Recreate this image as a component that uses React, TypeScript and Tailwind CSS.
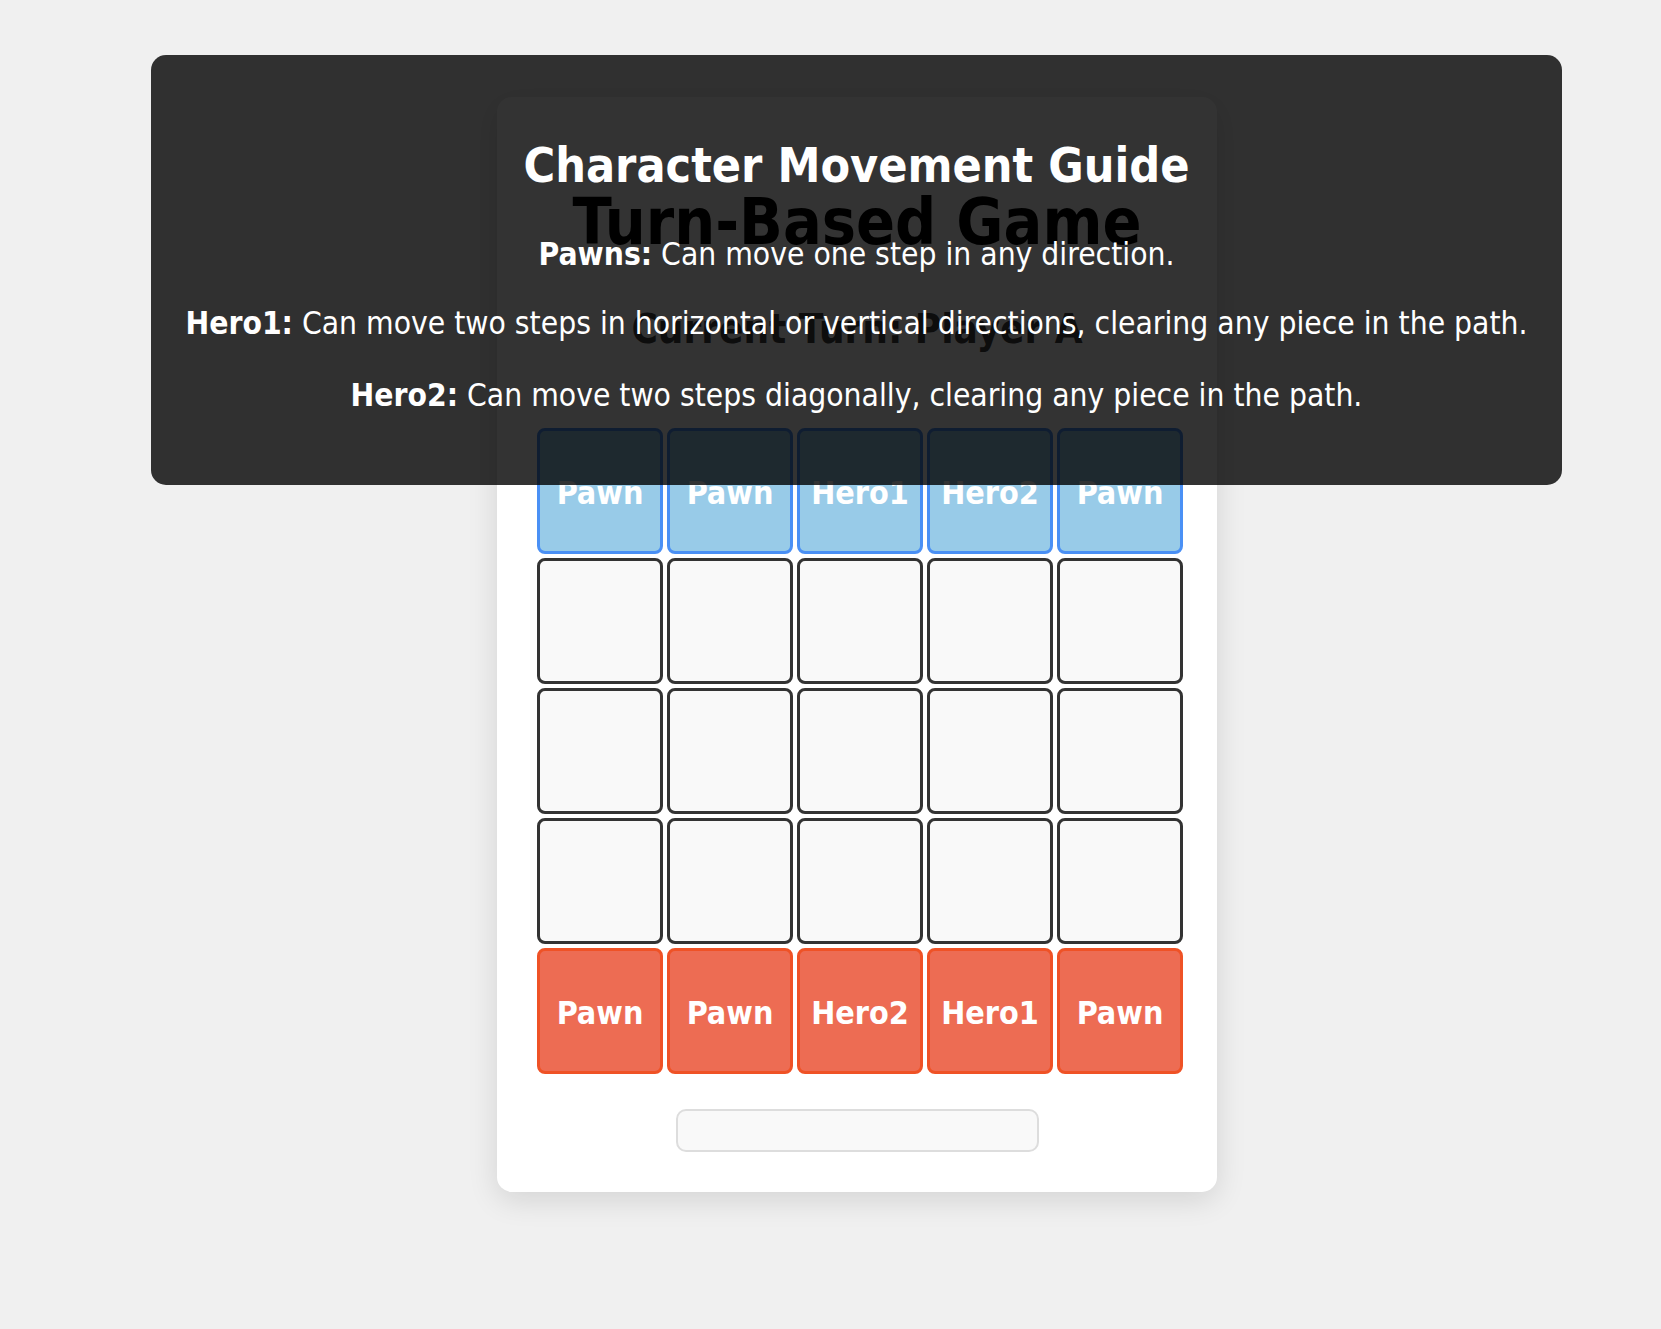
import React from "react";

type Side = "a" | "b" | null;

interface Cell {
  side: Side;
  label: string;
}

const topRow: Cell[] = ["Pawn", "Pawn", "Hero1", "Hero2", "Pawn"].map((label) => ({ side: "a", label }));
const bottomRow: Cell[] = ["Pawn", "Pawn", "Hero2", "Hero1", "Pawn"].map((label) => ({ side: "b", label }));
const emptyRow: Cell[] = Array.from({ length: 5 }, () => ({ side: null, label: "" }));

const board: Cell[][] = [topRow, emptyRow, emptyRow, emptyRow, bottomRow];

const fontStack = "font-['DejaVu_Sans_Condensed','DejaVu_Sans',sans-serif] font-stretch-condensed";

const BoardCell = ({ cell }: { cell: Cell }) => {
  const colors =
    cell.side === "a"
      ? "bg-[#98cbe8] border-[#4a90f5]"
      : cell.side === "b"
        ? "bg-[#ed6c53] border-[#ef5226]"
        : "bg-[#f9f9f9] border-[#333333]";

  return (
    <div
      className={`flex h-[126px] w-[126px] items-center justify-center rounded-[8px] border-[3px] pt-[4px] text-[32px] font-bold text-white ${colors}`}
    >
      {cell.label}
    </div>
  );
};

export default function App() {
  return (
    <div className={`relative min-h-screen bg-[#f0f0f0] ${fontStack}`}>
      {/* game card */}
      <div className="flex justify-center pl-[53px] pt-[97px] pb-[138px]">
        <div className="w-[720px] rounded-[15px] bg-white px-[40px] pt-[88px] pb-[40px] shadow-[0_8px_30px_rgba(0,0,0,0.12)]">
          <h1 className="text-center text-[64px] font-bold leading-[75px] text-black">
            Turn-Based Game
          </h1>
          <h2 className="mt-[46px] text-center text-[40px] font-bold leading-[47px] text-[#444]">
            Current Turn: Player A
          </h2>
          <div className="mt-[75px] grid w-max grid-cols-[repeat(5,126px)] gap-[4px]">
            {board.map((row, r) =>
              row.map((cell, c) => <BoardCell key={`${r}-${c}`} cell={cell} />),
            )}
          </div>
          <div className="mx-auto mt-[35px] h-[43px] w-[363px] rounded-[10px] border-2 border-[#dddddd] bg-[#f9f9f9]" />
        </div>
      </div>

      {/* movement guide overlay */}
      <div className="absolute left-[151px] top-[55px] h-[430px] w-[1411px] rounded-[15px] bg-black/80 pt-[82px] text-center text-white">
        <h2 className="text-[48px] font-bold leading-[56px]">Character Movement Guide</h2>
        <p className="mt-[43px] text-[31.5px] leading-[37px]">
          <strong>Pawns:</strong> Can move one step in any direction.
        </p>
        <p className="mt-[32px] text-[31.5px] leading-[37px]">
          <strong>Hero1:</strong> Can move two steps in horizontal or vertical directions, clearing any piece in the path.
        </p>
        <p className="mt-[35px] text-[31.5px] leading-[37px]">
          <strong>Hero2:</strong> Can move two steps diagonally, clearing any piece in the path.
        </p>
      </div>
    </div>
  );
}
